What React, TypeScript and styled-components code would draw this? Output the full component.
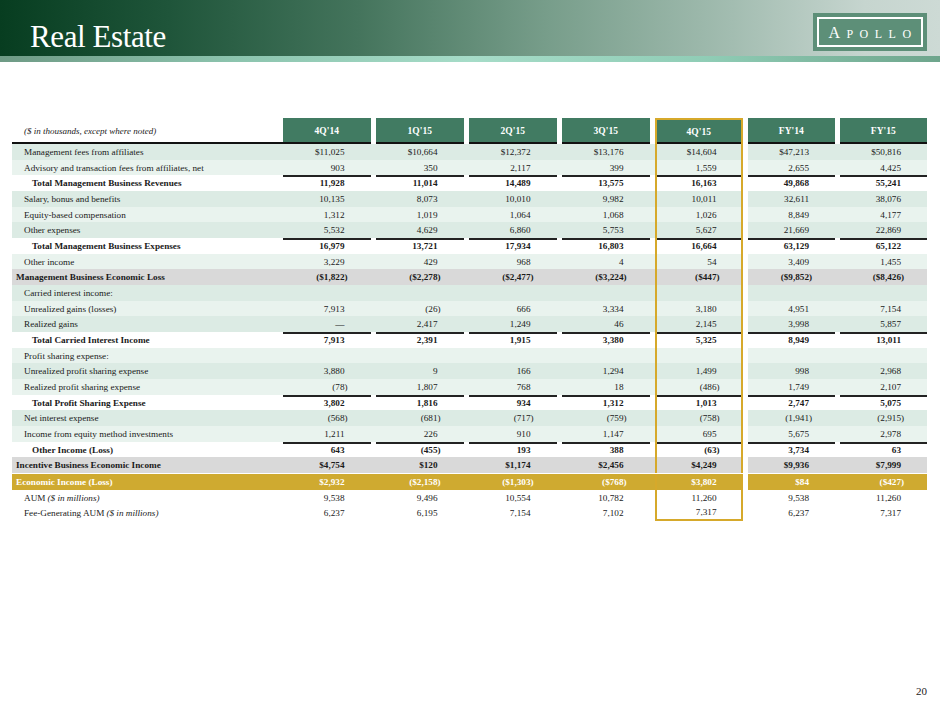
import React from 'react';
import styled, {createGlobalStyle} from 'styled-components';

type Kind = 'a' | 'b' | 'total' | 'gray' | 'gold' | 'plain';

type RowT = {
  label: string;
  note?: string;
  kind: Kind;
  values?: string[];
};

const columns = ["4Q'14", "1Q'15", "2Q'15", "3Q'15", "4Q'15", "FY'14", "FY'15"];
const HL = 4;

const rows: RowT[] = [
  {label: 'Management fees from affiliates', kind: 'a', values: ['$11,025', '$10,664', '$12,372', '$13,176', '$14,604', '$47,213', '$50,816']},
  {label: 'Advisory and transaction fees from affiliates, net', kind: 'b', values: ['903', '350', '2,117', '399', '1,559', '2,655', '4,425']},
  {label: 'Total Management Business Revenues', kind: 'total', values: ['11,928', '11,014', '14,489', '13,575', '16,163', '49,868', '55,241']},
  {label: 'Salary, bonus and benefits', kind: 'a', values: ['10,135', '8,073', '10,010', '9,982', '10,011', '32,611', '38,076']},
  {label: 'Equity-based compensation', kind: 'b', values: ['1,312', '1,019', '1,064', '1,068', '1,026', '8,849', '4,177']},
  {label: 'Other expenses', kind: 'a', values: ['5,532', '4,629', '6,860', '5,753', '5,627', '21,669', '22,869']},
  {label: 'Total Management Business Expenses', kind: 'total', values: ['16,979', '13,721', '17,934', '16,803', '16,664', '63,129', '65,122']},
  {label: 'Other income', kind: 'b', values: ['3,229', '429', '968', '4', '54', '3,409', '1,455']},
  {label: 'Management Business Economic Loss', kind: 'gray', values: ['($1,822)', '($2,278)', '($2,477)', '($3,224)', '($447)', '($9,852)', '($8,426)']},
  {label: 'Carried interest income:', kind: 'a'},
  {label: 'Unrealized gains (losses)', kind: 'b', values: ['7,913', '(26)', '666', '3,334', '3,180', '4,951', '7,154']},
  {label: 'Realized gains', kind: 'a', values: ['\u2014', '2,417', '1,249', '46', '2,145', '3,998', '5,857']},
  {label: 'Total Carried Interest Income', kind: 'total', values: ['7,913', '2,391', '1,915', '3,380', '5,325', '8,949', '13,011']},
  {label: 'Profit sharing expense:', kind: 'b'},
  {label: 'Unrealized profit sharing expense', kind: 'a', values: ['3,880', '9', '166', '1,294', '1,499', '998', '2,968']},
  {label: 'Realized profit sharing expense', kind: 'b', values: ['(78)', '1,807', '768', '18', '(486)', '1,749', '2,107']},
  {label: 'Total Profit Sharing Expense', kind: 'total', values: ['3,802', '1,816', '934', '1,312', '1,013', '2,747', '5,075']},
  {label: 'Net interest expense', kind: 'a', values: ['(568)', '(681)', '(717)', '(759)', '(758)', '(1,941)', '(2,915)']},
  {label: 'Income from equity method investments', kind: 'b', values: ['1,211', '226', '910', '1,147', '695', '5,675', '2,978']},
  {label: 'Other Income (Loss)', kind: 'total', values: ['643', '(455)', '193', '388', '(63)', '3,734', '63']},
  {label: 'Incentive Business Economic Income', kind: 'gray', values: ['$4,754', '$120', '$1,174', '$2,456', '$4,249', '$9,936', '$7,999']},
  {label: 'Economic Income (Loss)', kind: 'gold', values: ['$2,932', '($2,158)', '($1,303)', '($768)', '$3,802', '$84', '($427)']},
  {label: 'AUM', note: '($ in millions)', kind: 'plain', values: ['9,538', '9,496', '10,554', '10,782', '11,260', '9,538', '11,260']},
  {label: 'Fee-Generating AUM', note: '($ in millions)', kind: 'plain', values: ['6,237', '6,195', '7,154', '7,102', '7,317', '6,237', '7,317']},
];

const bgFor: Record<Kind, string> = {
  a: '#dcebe4',
  b: '#e9f3ee',
  total: '#ffffff',
  gray: '#d9d9d9',
  gold: '#cfaa30',
  plain: '#ffffff',
};

const GlobalStyle = createGlobalStyle`
  html, body {
    margin: 0;
    padding: 0;
    background: #fff;
  }
  * {
    box-sizing: border-box;
  }
`;

const App = () => {
  return (
    <>
      <GlobalStyle />
      <Page>
        <Banner>
          <Title>Real Estate</Title>
          <LogoBox>
            <LogoInner>
              <LogoBig>A</LogoBig>
              <LogoSmall>POLLO</LogoSmall>
            </LogoInner>
          </LogoBox>
        </Banner>
        <Stripe />

        <Table>
          <Row>
            <LeftSeg $bg="#fff">
              <HeadLabel>($ in thousands, except where noted)</HeadLabel>
              {columns.slice(0, 5).map((c, i) => (
                <HeadCell key={c} $hl={i === HL}>
                  {c}
                </HeadCell>
              ))}
            </LeftSeg>
            <RightSeg $bg="#fff">
              {columns.slice(5).map((c) => (
                <HeadCell key={c}>{c}</HeadCell>
              ))}
            </RightSeg>
          </Row>

          {rows.map((row, ri) => {
            const last = ri === rows.length - 1;
            const vals = row.values ?? columns.map(() => '');
            const cell = (v: string, i: number) => (
              <NumCell
                key={i}
                $kind={row.kind}
                $hl={i === HL}
                $last={last && i === HL}
                $paren={v.endsWith(')')}
              >
                {v}
              </NumCell>
            );
            return (
              <Row key={row.label} $gap={row.kind === 'gold'}>
                <LeftSeg $bg={bgFor[row.kind]}>
                  <Label $kind={row.kind}>
                    {row.label}
                    {row.note && (
                      <>
                        {' '}
                        <Note>{row.note}</Note>
                      </>
                    )}
                  </Label>
                  {vals.slice(0, 5).map((v, i) => cell(v, i))}
                </LeftSeg>
                <RightSeg $bg={bgFor[row.kind]}>
                  {vals.slice(5).map((v, i) => cell(v, i + 5))}
                </RightSeg>
              </Row>
            );
          })}
        </Table>

        <PageNumber>20</PageNumber>
      </Page>
    </>
  );
};

const Page = styled.div`
  width: 940px;
  height: 705px;
  display: flex;
  flex-direction: column;
  font-family: 'Liberation Serif', 'Times New Roman', serif;
  color: #1a1a1a;
  overflow: hidden;
`;

const Banner = styled.div`
  height: 56px;
  display: flex;
  justify-content: space-between;
  align-items: flex-start;
  padding: 0 13px 0 30px;
  background: linear-gradient(
    90deg,
    #073d20 0%,
    #1f553a 18%,
    #44745c 38%,
    #779d8a 58%,
    #a3bdb1 78%,
    #c6d5cf 92%,
    #cddad5 100%
  );
`;

const Stripe = styled.div`
  height: 6px;
  background: linear-gradient(
    90deg,
    #6e9a85 0%,
    #8cc4ae 25%,
    #a6dcc8 50%,
    #90cdb6 75%,
    #6ea58c 100%
  );
`;

const Title = styled.h1`
  margin: 21px 0 0;
  font-family: 'Liberation Serif', 'Times New Roman', serif;
  font-weight: normal;
  font-size: 31px;
  line-height: 31px;
  color: #fff;
  letter-spacing: -0.4px;
`;

const LogoBox = styled.div`
  margin-top: 13px;
  width: 114px;
  height: 38px;
  padding: 4px;
  background: #5d8f78;
`;

const LogoInner = styled.div`
  height: 100%;
  border: 2.5px solid #fff;
  display: flex;
  align-items: baseline;
  justify-content: center;
  padding-top: 5px;
  padding-left: 6px;
  color: #fff;
  font-family: 'Liberation Serif', 'Times New Roman', serif;
  letter-spacing: 6.5px;
`;

const LogoBig = styled.span`
  font-size: 16px;
`;

const LogoSmall = styled.span`
  font-size: 12px;
`;

const Table = styled.div`
  margin: 56px 0 0 12px;
  width: 916px;
  display: flex;
  flex-direction: column;
`;

const Row = styled.div<{$gap?: boolean}>`
  display: flex;
  gap: 5px;
  border-top: ${({$gap}) => ($gap ? '1.5px solid #fff' : 'none')};
`;

const LeftSeg = styled.div<{$bg: string}>`
  display: grid;
  grid-template-columns: 265.5px repeat(5, 87.5px);
  column-gap: 5.5px;
  background: ${({$bg}) => $bg};
`;

const RightSeg = styled.div<{$bg: string}>`
  display: grid;
  grid-template-columns: repeat(2, 87.5px);
  column-gap: 4.5px;
  background: ${({$bg}) => $bg};
`;

const HeadLabel = styled.div`
  height: 26px;
  margin-right: -5.5px;
  padding-left: 12px;
  display: flex;
  align-items: center;
  font-style: italic;
  font-size: 9px;
  box-shadow: inset 0 -2px 0 #111;
`;

const HeadCell = styled.div<{$hl?: boolean}>`
  height: 26px;
  display: flex;
  align-items: center;
  justify-content: center;
  background: #417b62;
  color: #fff;
  font-weight: bold;
  font-size: 9.5px;
  box-shadow: inset 0 -2px 0 #111;
  border: ${({$hl}) => ($hl ? '2px solid #d6a92b' : 'none')};
  border-bottom: none;
  padding-bottom: 1px;
`;

const Label = styled.div<{$kind: Kind}>`
  height: 15.68px;
  display: flex;
  align-items: center;
  white-space: nowrap;
  font-size: 9.2px;
  padding-left: ${({$kind}) =>
    $kind === 'total' ? '20px' : $kind === 'gray' || $kind === 'gold' ? '4px' : '12px'};
  font-weight: ${({$kind}) =>
    $kind === 'total' || $kind === 'gray' || $kind === 'gold' ? 'bold' : 'normal'};
  color: ${({$kind}) => ($kind === 'gold' ? '#fff' : '#1a1a1a')};
`;

const Note = styled.span`
  font-style: italic;
  margin-left: 2px;
`;

const NumCell = styled.div<{$kind: Kind; $hl: boolean; $last: boolean; $paren: boolean}>`
  height: 15.68px;
  display: flex;
  align-items: center;
  justify-content: flex-end;
  white-space: nowrap;
  font-size: 9.2px;
  padding-right: ${({$hl, $paren}) => {
    const base = $hl ? 24 : 26;
    return $paren ? `calc(${base}px - 0.333em)` : `${base}px`;
  }};
  font-weight: ${({$kind}) =>
    $kind === 'total' || $kind === 'gray' || $kind === 'gold' ? 'bold' : 'normal'};
  color: ${({$kind}) => ($kind === 'gold' ? '#fff' : '#1a1a1a')};
  box-shadow: ${({$kind}) => ($kind === 'total' ? 'inset 0 2px 0 #222' : 'none')};
  border-left: ${({$hl}) => ($hl ? '2px solid #d6a92b' : 'none')};
  border-right: ${({$hl}) => ($hl ? '2px solid #d6a92b' : 'none')};
  border-bottom: ${({$last}) => ($last ? '2px solid #d6a92b' : 'none')};
`;

const PageNumber = styled.div`
  margin-top: auto;
  padding: 0 13px 8px 0;
  text-align: right;
  font-size: 11px;
  color: #222;
`;

export default App;
